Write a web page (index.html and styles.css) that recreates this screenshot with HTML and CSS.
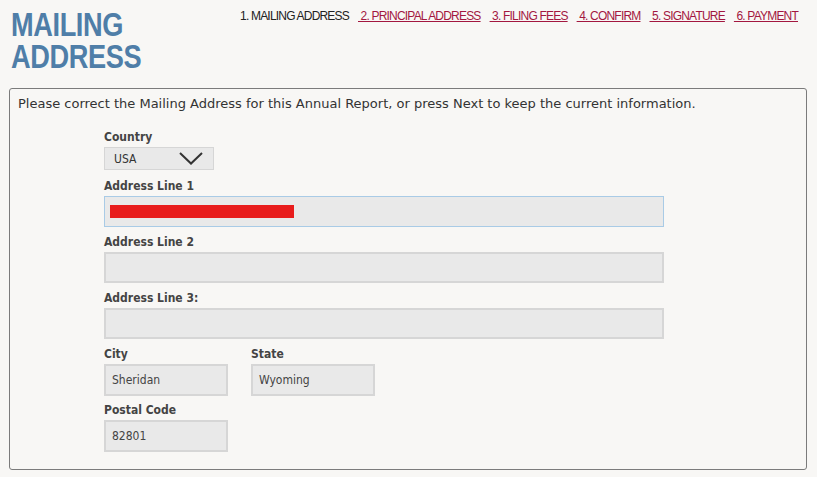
FILE: index.html
```html
<!DOCTYPE html>
<html lang="en">
<head>
    <meta charset="UTF-8">
    <title>Mailing Address</title>
    <link rel="stylesheet" href="styles.css">
</head>
<body>
    <header class="top">
        <h1 class="page-title">MAILING<br>ADDRESS</h1>
        <nav class="steps">
            <span class="step current">1. MAILING ADDRESS</span>
            <a class="step" href="#">&nbsp;2. PRINCIPAL ADDRESS</a>
            <a class="step" href="#">&nbsp;3. FILING FEES</a>
            <a class="step" href="#">&nbsp;4. CONFIRM</a>
            <a class="step" href="#">&nbsp;5. SIGNATURE</a>
            <a class="step" href="#">&nbsp;6. PAYMENT</a>
        </nav>
    </header>

    <main class="panel">
        <p class="intro">Please correct the Mailing Address for this Annual Report, or press Next to keep the current information.</p>

        <div class="form">
            <div class="field">
                <label for="country">Country</label>
                <div class="select">
                    <span>USA</span>
                    <svg width="24" height="13" viewBox="0 0 24 13"><path d="M1 1 L12 11.5 L23 1" fill="none" stroke="#333" stroke-width="2"/></svg>
                </div>
            </div>
            <div class="field">
                <label for="addr1">Address Line 1</label>
                <div class="input wide focused" id="addr1"><span class="redact"></span></div>
            </div>
            <div class="field">
                <label for="addr2">Address Line 2</label>
                <div class="input wide" id="addr2"></div>
            </div>
            <div class="field">
                <label for="addr3">Address Line 3:</label>
                <div class="input wide" id="addr3"></div>
            </div>
            <div class="row">
                <div class="field">
                    <label for="city">City</label>
                    <div class="input short" id="city">Sheridan</div>
                </div>
                <div class="field">
                    <label for="state">State</label>
                    <div class="input short" id="state">Wyoming</div>
                </div>
            </div>
            <div class="field postal">
                <label for="zip">Postal Code</label>
                <div class="input short" id="zip">82801</div>
            </div>
        </div>
    </main>
</body>
</html>
```

FILE: styles.css
```css
body {
    margin: 0;
    padding: 0;
    background: #f8f7f5;
    font-family: "DejaVu Sans Condensed", "DejaVu Sans", sans-serif;
    color: #333;
}
.top {
    display: flex;
    justify-content: space-between;
    align-items: flex-start;
    height: 88px;
}
.page-title {
    margin: 8px 0 0 11px;
    font-family: "Liberation Sans", Arial, sans-serif;
    font-size: 34px;
    line-height: 32px;
    font-weight: bold;
    letter-spacing: -0.5px;
    color: #4f7ea8;
    transform: scaleX(0.8);
    transform-origin: left top;
}
.steps {
    display: flex;
    gap: 9px;
    margin: 9px 19px 0 0;
    font-family: "Liberation Sans", Arial, sans-serif;
    font-size: 12px;
    letter-spacing: -0.8px;
}
.step {
    color: #222;
}
a.step {
    color: #a3173f;
    text-decoration: underline;
}
.panel {
    margin: 0 10px 6px 9px;
    border: 1px solid #7b7b7b;
    border-radius: 3px;
    padding: 7px 8px 17px;
}
.intro {
    margin: 0 0 17px;
    font-family: "DejaVu Sans", sans-serif;
    font-size: 13px;
    line-height: 16px;
    color: #333;
}
.form {
    padding-left: 86px;
    display: flex;
    flex-direction: column;
    gap: 7px;
}
.row {
    display: flex;
    gap: 23px;
}
.postal {
    margin-top: -1px;
}
label {
    display: block;
    font-size: 12px;
    font-weight: bold;
    line-height: 16px;
    margin-bottom: 2px;
    color: #444;
}
.select {
    width: 110px;
    height: 23px;
    box-sizing: border-box;
    background: #e9e9e9;
    border: 1px solid #d6d6d6;
    display: flex;
    align-items: center;
    justify-content: space-between;
    padding: 0 10px 0 9px;
    font-size: 12px;
    color: #333;
    margin-bottom: 1px;
}
.input {
    height: 31px;
    box-sizing: border-box;
    background: #e9e9e9;
    border: 2px solid #d6d6d6;
    padding: 0 6px;
    display: flex;
    align-items: center;
    font-size: 12px;
    color: #444;
}
.wide {
    width: 560px;
}
.short {
    width: 124px;
    height: 32px;
}
.focused {
    border: 1px solid #a9cbe6;
    padding-left: 5px;
}
.redact {
    display: block;
    width: 184px;
    height: 13px;
    background: #e81c1c;
}
```
